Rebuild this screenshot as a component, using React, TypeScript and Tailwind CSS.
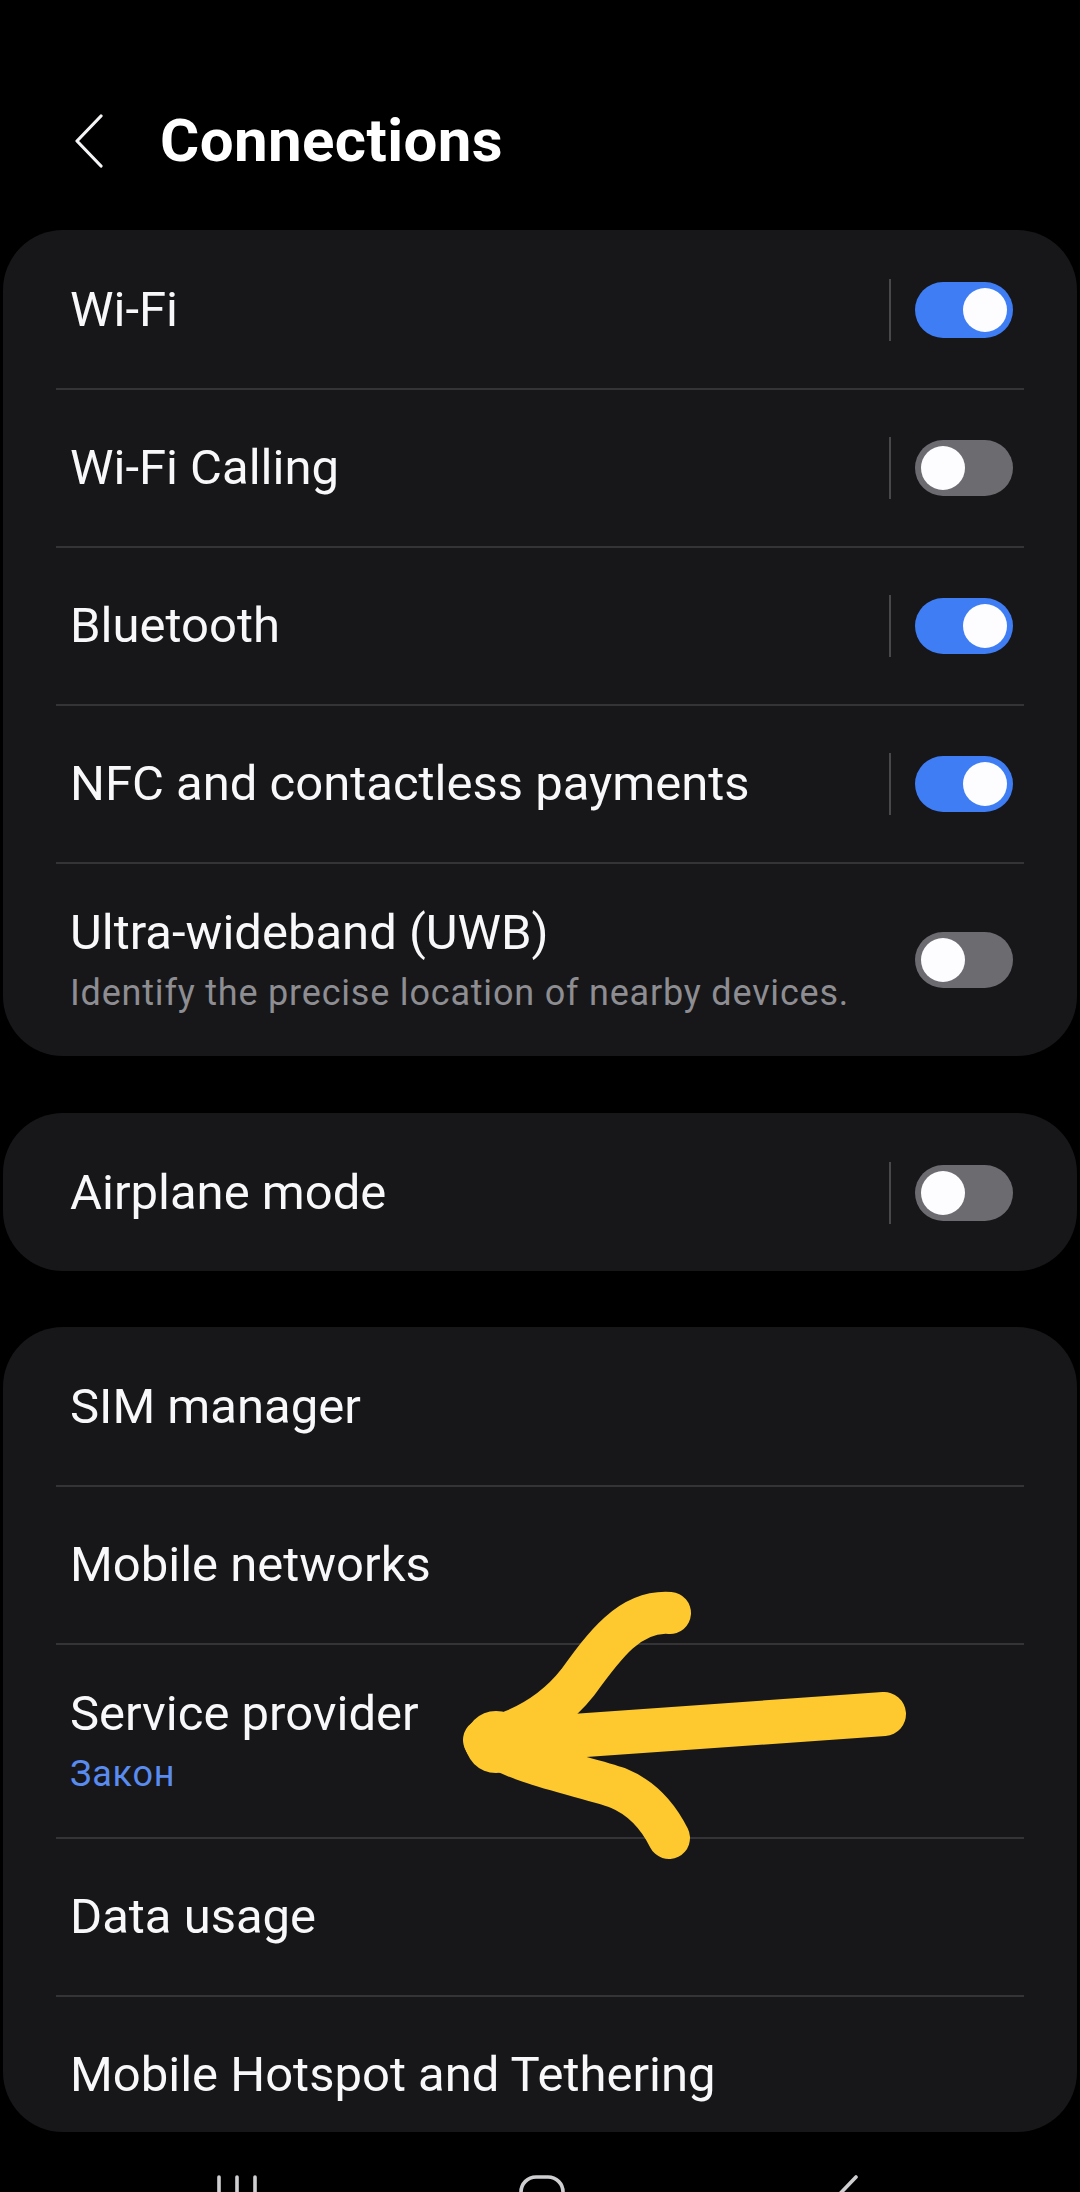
import React from 'react';

const font = { fontFamily: 'Roboto, "Noto Sans", sans-serif' };

const Toggle: React.FC<{ on: boolean }> = ({ on }) => (
    <div
        className={`w-[98px] h-[56px] rounded-full flex items-center px-[6px] shrink-0 ${
            on ? 'bg-[#3e7df4] justify-end' : 'bg-[#6c6b70] justify-start'
        }`}
    >
        <div className="w-[44px] h-[44px] rounded-full bg-[#fdfdff]" />
    </div>
);

const Divider = () => <div className="h-[2px] mx-[53px] bg-[#343437]" />;

interface RowProps {
    title: string;
    subtitle?: string;
    subColor?: string;
    toggle?: boolean;
    separator?: boolean;
    tall?: boolean;
}

const Row: React.FC<RowProps> = ({ title, subtitle, subColor, toggle, separator, tall }) => (
    <div className={`flex items-center pl-[67px] pr-[64px] ${tall ? 'h-[192px]' : 'h-[156px]'}`}>
        <div className="flex-1 min-w-0">
            <div className="text-[49px] leading-[56px] text-[#f8f8fa] whitespace-nowrap">{title}</div>
            {subtitle && (
                <div className={`mt-[10px] text-[36px] leading-[44px] tracking-[0.8px] whitespace-nowrap ${subColor}`}>
                    {subtitle}
                </div>
            )}
        </div>
        {separator && <div className="w-[2px] h-[62px] bg-[#48484b] mr-[24px]" />}
        {toggle !== undefined && <Toggle on={toggle} />}
    </div>
);

export default function App() {
    return (
        <div className="relative w-[1080px] h-[2192px] bg-black overflow-hidden" style={font}>
            {/* Header */}
            <div className="h-[230px] pt-[107px] pl-[74px] flex items-start">
                <div className="h-[68px] flex items-center">
                    <svg width="30" height="54" viewBox="0 0 30 54" fill="none">
                        <path d="M27 2 L3 27 L27 52" stroke="#f5f5f7" strokeWidth="3.2" strokeLinecap="round" strokeLinejoin="round" />
                    </svg>
                </div>
                <h1 className="ml-[56px] text-[60px] leading-[68px] font-bold text-white tracking-[0.4px]">Connections</h1>
            </div>

            {/* Card 1 */}
            <div className="mx-[3px] rounded-[60px] bg-[#17171a] pt-[2px]">
                <Row title="Wi-Fi" toggle={true} separator />
                <Divider />
                <Row title="Wi-Fi Calling" toggle={false} separator />
                <Divider />
                <Row title="Bluetooth" toggle={true} separator />
                <Divider />
                <Row title="NFC and contactless payments" toggle={true} separator />
                <Divider />
                <Row
                    title="Ultra-wideband (UWB)"
                    subtitle="Identify the precise location of nearby devices."
                    subColor="text-[#8d8d92]"
                    toggle={false}
                    tall
                />
            </div>

            {/* Card 2 */}
            <div className="mt-[57px] mx-[3px] rounded-[60px] bg-[#17171a] pt-[2px]">
                <Row title="Airplane mode" toggle={false} separator />
            </div>

            {/* Card 3 */}
            <div className="mt-[56px] mx-[3px] h-[805px] overflow-hidden rounded-[60px] bg-[#17171a] pt-[2px]">
                <Row title="SIM manager" />
                <Divider />
                <Row title="Mobile networks" />
                <Divider />
                <Row title="Service provider" subtitle="Закон" subColor="text-[#5a8cf0]" tall />
                <Divider />
                <Row title="Data usage" />
                <Divider />
                <Row title="Mobile Hotspot and Tethering" />
            </div>

            {/* Navigation bar */}
            <div className="h-[60px] overflow-hidden flex items-start pt-[43px]">
                <svg className="ml-[216px] shrink-0" width="44" height="44" viewBox="0 0 44 44" fill="none">
                    <path d="M3 2 V42 M21 2 V42 M39 2 V42" stroke="#cfcfd2" strokeWidth="3.6" strokeLinecap="round" />
                </svg>
                <svg className="ml-[259px] shrink-0" width="46" height="46" viewBox="0 0 46 46" fill="none">
                    <rect x="2" y="2" width="42" height="42" rx="15" stroke="#cfcfd2" strokeWidth="3.6" />
                </svg>
                <svg className="ml-[264px] shrink-0" width="30" height="54" viewBox="0 0 30 54" fill="none">
                    <path d="M27 2 L3 27 L27 52" stroke="#cfcfd2" strokeWidth="3.6" strokeLinecap="round" strokeLinejoin="round" />
                </svg>
            </div>

            {/* Hand-drawn annotation arrow */}
            <svg
                className="absolute inset-0 pointer-events-none"
                width="1080"
                height="2192"
                viewBox="0 0 1080 2192"
                fill="none"
            >
                <g stroke="#fec92f" strokeLinecap="round" strokeLinejoin="round">
                    <path
                        d="M670 1613 C 630 1610, 604 1646, 578 1682 C 556 1710, 526 1730, 484 1740 C 520 1766, 586 1776, 618 1788 C 645 1799, 660 1820, 669 1838"
                        strokeWidth="42"
                    />
                    <path d="M486 1742 L 884 1714" strokeWidth="44" />
                </g>
                <circle cx="496" cy="1742" r="31" fill="#fec92f" />
            </svg>
        </div>
    );
}
